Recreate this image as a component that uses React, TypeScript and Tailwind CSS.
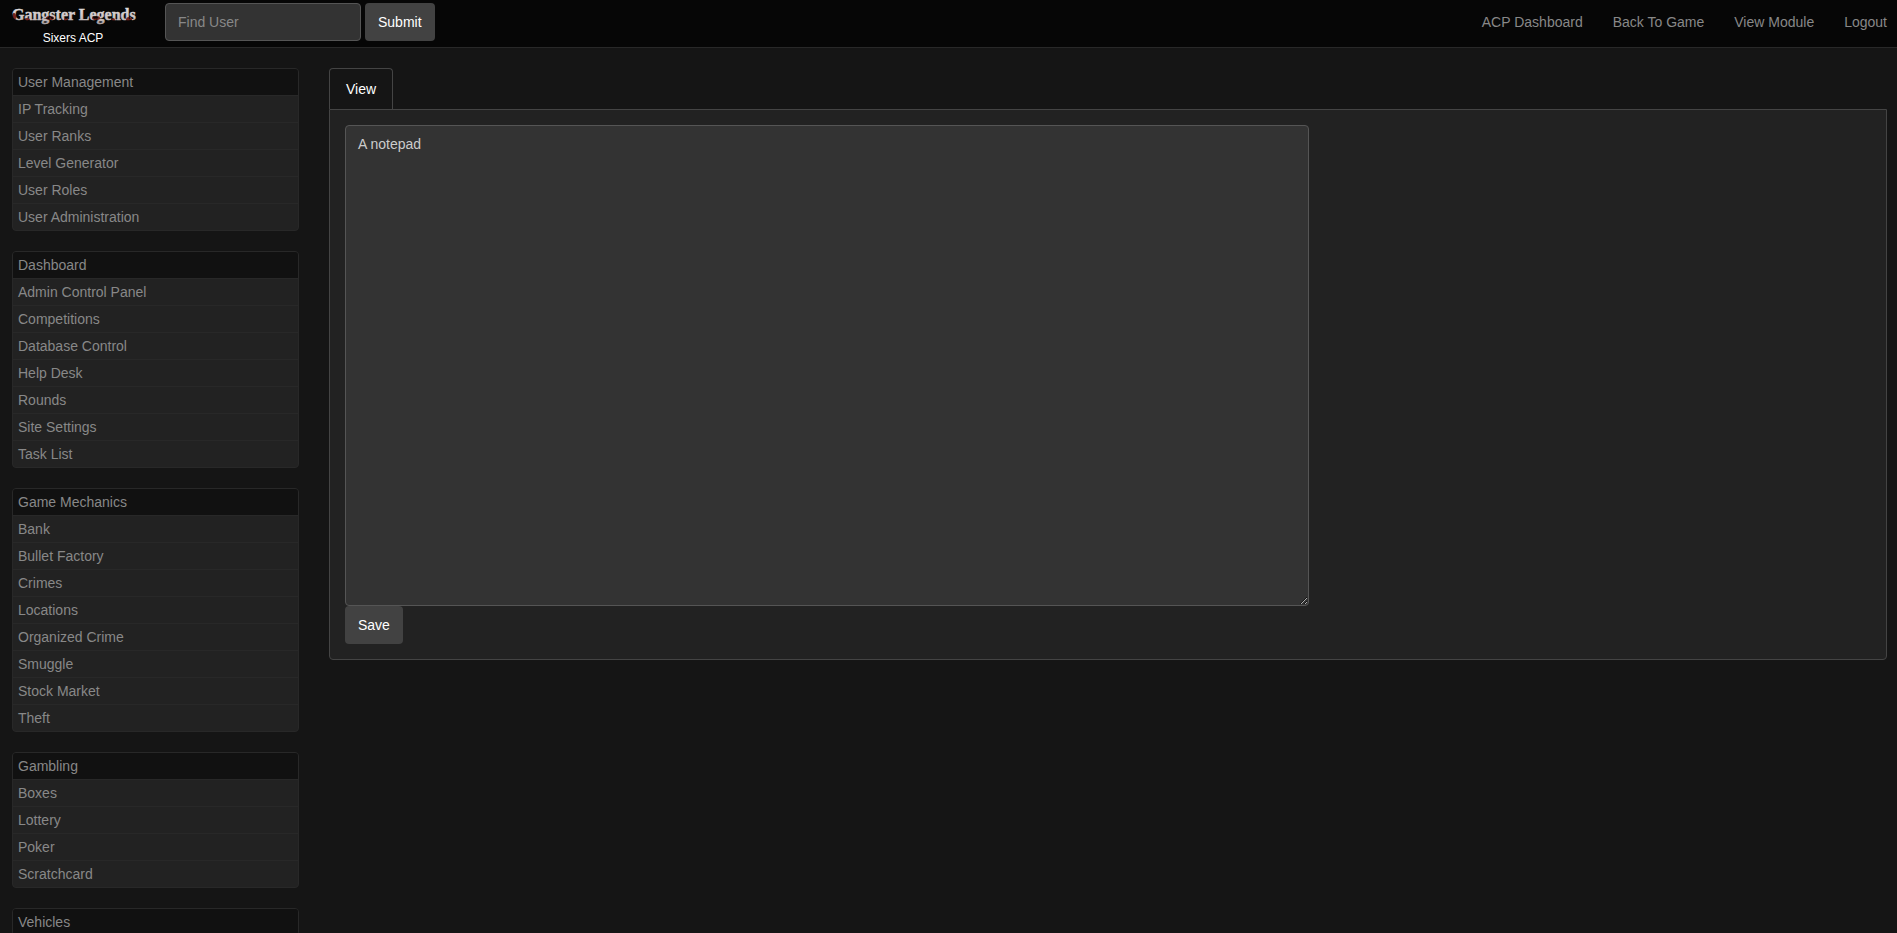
import { useState } from 'react'

type MenuGroup = { title: string; items: string[] }

const MENU: MenuGroup[] = [
  {
    title: 'User Management',
    items: ['IP Tracking', 'User Ranks', 'Level Generator', 'User Roles', 'User Administration'],
  },
  {
    title: 'Dashboard',
    items: [
      'Admin Control Panel', 'Competitions', 'Database Control', 'Help Desk',
      'Rounds', 'Site Settings', 'Task List',
    ],
  },
  {
    title: 'Game Mechanics',
    items: [
      'Bank', 'Bullet Factory', 'Crimes', 'Locations',
      'Organized Crime', 'Smuggle', 'Stock Market', 'Theft',
    ],
  },
  { title: 'Gambling', items: ['Boxes', 'Lottery', 'Poker', 'Scratchcard'] },
  { title: 'Vehicles', items: [] },
]

const NAV_LINKS = ['ACP Dashboard', 'Back To Game', 'View Module', 'Logout']

function Logo() {
  return (
    <svg width="122" height="28" viewBox="0 0 122 28" className="overflow-visible" role="img" aria-label="Gangster Legends">
      <defs>
        <linearGradient id="steel" x1="0" y1="0" x2="0" y2="1">
          <stop offset="0" stopColor="#f0ecec" />
          <stop offset="0.6" stopColor="#c8bfbf" />
          <stop offset="1" stopColor="#8d8080" />
        </linearGradient>
        {/* steel lettering with blood splashed over it */}
        <pattern id="blood" width="140" height="28" patternUnits="userSpaceOnUse">
          <rect width="140" height="28" fill="url(#steel)" />
          <g fill="#7a2420">
            <ellipse cx="2" cy="15" rx="2" ry="4" />
            <ellipse cx="15" cy="18" rx="3" ry="2" />
            <ellipse cx="38" cy="16" rx="4" ry="2" />
            <ellipse cx="54" cy="18" rx="2" ry="3" />
            <ellipse cx="84" cy="16" rx="4" ry="2" />
            <ellipse cx="101" cy="18" rx="2" ry="2" />
            <ellipse cx="117" cy="18" rx="3" ry="3" />
          </g>
        </pattern>
      </defs>
      <text
        x="0" y="18" fill="url(#blood)" stroke="url(#blood)" strokeWidth="0.5"
        className="font-['Liberation_Serif',serif] text-[16px] font-bold"
      >
        Gangster Legends
      </text>
    </svg>
  )
}

function TopBar() {
  const [query, setQuery] = useState('')

  return (
    <header className="flex min-h-12 flex-wrap items-start justify-between border-b border-[#282828] bg-[#060606] pl-3 pr-[10px]">
      <div className="flex gap-[31px]">
        <a href="#" className="flex flex-col items-center pt-[2px] text-[12px] leading-[16px] text-white">
          <Logo />
          <span>Sixers ACP</span>
        </a>
        <form className="flex gap-1 pt-[3px]" onSubmit={e => e.preventDefault()}>
          <input
            type="text" aria-label="Find User" placeholder="Find User"
            value={query}
            onChange={e => setQuery(e.target.value)}
            className="h-[38px] w-[196px] rounded border border-[#555] bg-[#333] px-3 text-[#ccc] placeholder:text-[#888] focus:outline-none"
          />
          <button type="submit" className="h-[38px] rounded bg-[#424242] px-[13px] text-white">Submit</button>
        </form>
      </div>
      <nav className="flex gap-[30px] pt-3">
        {NAV_LINKS.map(l => (
          <a key={l} href="#" className="text-[#888] hover:text-white">{l}</a>
        ))}
      </nav>
    </header>
  )
}

function SideMenu({ title, items }: MenuGroup) {
  return (
    <section className="overflow-hidden rounded border border-[#282828] bg-[#222]">
      <h2 className="bg-[#111] px-[5px] py-[3px]">{title}</h2>
      <ul>
        {items.map(item => (
          <li key={item} className="border-t border-[#282828]">
            <a href="#" className="block px-[5px] py-[3px] hover:text-white">{item}</a>
          </li>
        ))}
      </ul>
    </section>
  )
}

export default function App() {
  const [notes, setNotes] = useState('A notepad')

  return (
    <div className="min-h-screen bg-[#151515] font-['Liberation_Sans',Arial,sans-serif] text-[14px] leading-[20px] text-[#888]">
      <TopBar />

      <div className="grid gap-[30px] pl-3 pr-[10px] pt-5 md:grid-cols-[287px_minmax(0,1fr)]">
        {/* ── Module menu ── */}
        <aside className="flex flex-col gap-5">
          {MENU.map(g => <SideMenu key={g.title} title={g.title} items={g.items} />)}
        </aside>

        {/* ── Notepad ── */}
        <main>
          <div className="flex">
            <a href="#" className="rounded-t border border-b-0 border-[#444] px-4 py-[10px] text-white">View</a>
          </div>
          <form
            className="flex flex-col items-start rounded-b border border-[#444] bg-[#222] p-[15px]"
            onSubmit={e => e.preventDefault()}
          >
            <textarea
              aria-label="Notepad"
              value={notes}
              onChange={e => setNotes(e.target.value)}
              className="h-[481px] w-[964px] max-w-full rounded border border-[#555] bg-[#333] px-3 py-2 text-[#ccc] focus:outline-none"
            />
            <button type="submit" className="h-[38px] rounded bg-[#424242] px-[13px] text-white">Save</button>
          </form>
        </main>
      </div>
    </div>
  )
}
